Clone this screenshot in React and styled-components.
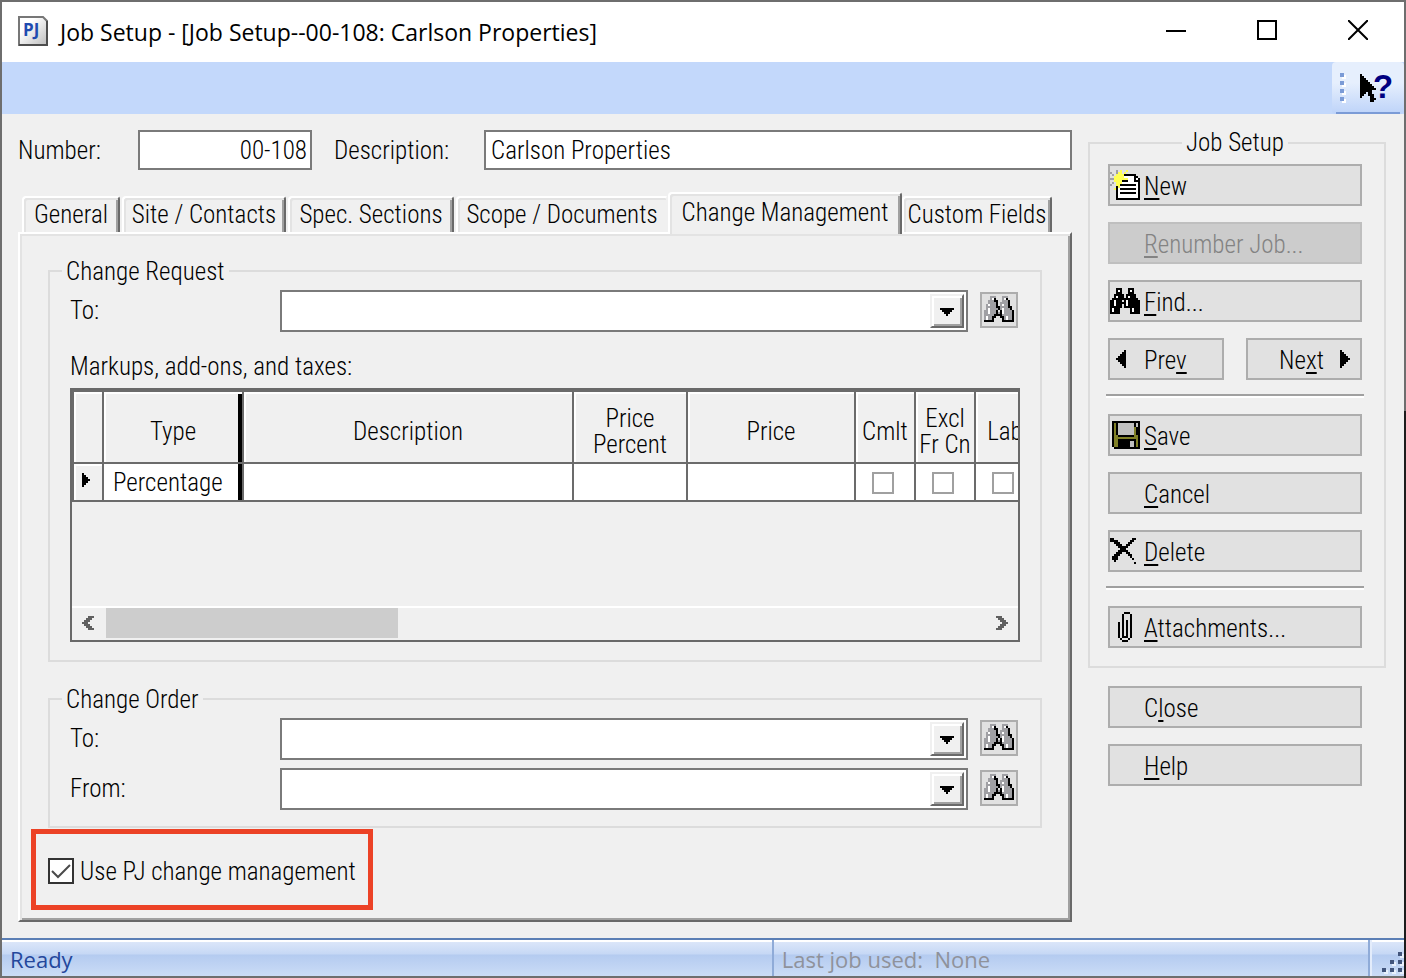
import { useState } from "react";
import styled, { createGlobalStyle, css } from "styled-components";

const GlobalStyle = createGlobalStyle`
  :root {
    --face: #f0f0f0;
    --shadow: #a0a0a0;
    --dark-shadow: #696969;
    --light: #e3e3e3;
    --group-line: #dcdcdc;
    --field-line: #7a7a7a;
    --grid-line: #6b6b6b;
  }

  * {
    box-sizing: border-box;
  }

  body {
    margin: 0;
  }

  body,
  button,
  input,
  select {
    color: #000;
    font-family: "Roboto Condensed", "Liberation Sans", sans-serif;
    font-size: 25px;
    font-weight: 300;
    line-height: 26px;
  }

  u {
    text-decoration-thickness: 2px;
    text-underline-offset: 3px;
    text-decoration-skip-ink: none;
  }
`;

/* ---------- pixel icons ---------- */

const palette = {
  k: "#000000",
  w: "#ffffff",
  g: "#a0a0a4",
  s: "#c0c0c0",
  y: "#ffff54",
  o: "#808026",
  d: "#606060",
};

const icons = {
  find: [
    "...kkk...kkk...",
    "...kwk...kwk...",
    "...kkk...kkk...",
    "..kkkkk.kkkkk..",
    "..kwkkk.kwkkk..",
    ".kkkkkkkkkkkkk.",
    "kkwkkk.kwkkkkkk",
    "kkwkkkkkwkkkkkk",
    "kkwkkk.kwkkkkkk",
    "kkkkkk.kkkkkkkk",
    "kwkkk.....kwkkk",
    "kwkkk.....kwkkk",
    "kkkkk.....kkkkk",
  ],
  lookup: [
    "...ggg...ggg...",
    "...gwk...gwk...",
    "..gggkk..gggk..",
    "..ggggk.ggggk..",
    ".gwgggk.gwggk..",
    ".gggggkkggggkk.",
    ".gwggggkgwgggk.",
    "ggwgggk.kwggggk",
    "ggwgggkgkwggggk",
    "gggggkkkkgggggk",
    "gwggkk..kkgwggk",
    "gwggk....kgwggk",
    "kkkkk....kkkkkk",
  ],
  fresh: [
    "...g.y..y......",
    "g..gyy.y.......",
    ".g.yyyykkkkkk..",
    "..yyyyywwwwwkk.",
    "ggyyyyyyywwwkwk",
    "..yyyykkkwwwkkk",
    ".g.yyywwwwwwwwk",
    "g..yykkkkkkkkwk",
    "...kywwwwwwwwwk",
    "..ykwkkkkkkkkwk",
    "...kwwwwwwwwwwk",
    "...kwkkkkkkkkwk",
    "...kwwwwwwwwwwk",
    "...kwwwwwwwwwwk",
    "...kkkkkkkkkkkk",
  ],
  save: [
    "kkkkkkkkkkkkkk",
    "kokssssssssksk",
    "kokssssssssksk",
    "kokssssssssokk",
    "kokssssssssokk",
    "kokssssssssokk",
    "kokssssssssokk",
    "kookkkkkkkkook",
    "kooooooooooook",
    "kookkkkkkkkkok",
    "kookkkkkksskok",
    "kookkkkkksskok",
    "kookkkkkksskok",
    ".kkkkkkkkkkkkk",
  ],
  remove: [
    "kk.........kk",
    "kkkk......kk.",
    "..kkk....kk..",
    "...kkk..kk...",
    "....kkkkk....",
    ".....kkk.....",
    "....kkkkk....",
    "...kkk..kk...",
    "..kkk....kk..",
    ".kkk......k..",
    ".kkk.......k.",
    "..k..........",
    "............k",
  ],
  clip: [
    "...kkk.",
    "..k...k",
    "..k...k",
    "..k...k",
    "..k.k.k",
    "k.k.k.k",
    "k.k.k.k",
    "k.k.k.k",
    "k.k.k.k",
    "k.k.k.k",
    "k.k.k.k",
    "k.k.k.k",
    "k.kkk.k",
    ".k...k.",
    "..kkk..",
  ],
  pointer: [
    "k.......",
    "kk......",
    "kkk.....",
    "kkkk....",
    "kkkkk...",
    "kkkkkk..",
    "kkkkkkk.",
    "kkkkkkkk",
    "kkkkkk..",
    "kkk.kk..",
    "kk..kkk.",
    "k....kk.",
    ".....kkk",
    ".....kk.",
  ],
  left: [
    "....k",
    "...kk",
    "..kkk",
    ".kkkk",
    "kkkkk",
    ".kkkk",
    "..kkk",
    "...kk",
    "....k",
  ],
  right: [
    "k....",
    "kk...",
    "kkk..",
    "kkkk.",
    "kkkkk",
    "kkkk.",
    "kkk..",
    "kk...",
    "k....",
  ],
  drop: ["kkkkkkk", ".kkkkk.", "..kkk..", "...k..."],
  row: ["k...", "kk..", "kkk.", "kkkk", "kkk.", "kk..", "k..."],
  scrollLeft: [
    "...ddd",
    "..ddd.",
    ".ddd..",
    "ddd...",
    ".ddd..",
    "..ddd.",
    "...ddd",
  ],
  scrollRight: [
    "ddd...",
    ".ddd..",
    "..ddd.",
    "...ddd",
    "..ddd.",
    ".ddd..",
    "ddd...",
  ],
};

const PixelSvg = styled.svg`
  display: block;
  flex: none;
`;

const PixelIcon = ({ name }) => {
  const rows = icons[name];
  const w = rows[0].length;
  const h = rows.length;
  return (
    <PixelSvg
      width={w * 2}
      height={h * 2}
      viewBox={`0 0 ${w} ${h}`}
      shapeRendering="crispEdges"
      aria-hidden="true"
    >
      {rows.map((row, y) =>
        [...row].map((cell, x) =>
          cell === "." ? null : (
            <rect
              key={`${x}.${y}`}
              x={x}
              y={y}
              width="1"
              height="1"
              fill={palette[cell]}
            />
          )
        )
      )}
    </PixelSvg>
  );
};

/* ---------- window frame ---------- */

const Window = styled.div`
  display: flex;
  flex-direction: column;
  min-height: 100vh;
  padding: 2px;
  background: linear-gradient(#6e6e6e 42%, #1c1c1c 42%) right / 2px 100%
      no-repeat,
    #6e6e6e;
`;

const TitleBar = styled.header`
  display: flex;
  align-items: center;
  height: 60px;
  padding: 0 1px 0 16px;
  background: #fff;

  h1 {
    flex: 1;
    margin: 0 0 0 11px;
    font: 400 23px/30px "Open Sans", sans-serif;
  }
`;

const CaptionButton = styled.button`
  display: flex;
  align-items: center;
  justify-content: center;
  width: 91px;
  height: 60px;
  padding: 0 0 4px;
  border: 0;
  background: none;
`;

const ToolStrip = styled.div`
  display: flex;
  justify-content: flex-end;
  height: 52px;
  background: #c3d8fb;
`;

const ToolPanel = styled.div`
  display: flex;
  align-items: center;
  gap: 14px;
  width: 72px;
  padding-left: 8px;
  border-radius: 4px;
  background: linear-gradient(#7b9bd6, #7b9bd6) 4px 100% / 64px 2px no-repeat,
    linear-gradient(#e6effd 40%, #bdd3f9);
`;

const ToolButton = styled.button`
  display: flex;
  padding: 0;
  border: 0;
  background: none;
`;

/* ---------- fields ---------- */

const Body = styled.main`
  display: grid;
  grid-template-columns: minmax(0, 1fr) 298px;
  flex: 1;
  gap: 16px;
  padding: 16px 18px 16px 16px;
  background: var(--face);
`;

const Column = styled.div`
  display: flex;
  flex-direction: column;
`;

const JobFields = styled.div`
  display: grid;
  grid-template-columns: 98px 174px 128px 1fr;
  column-gap: 22px;
  align-items: center;
  margin-bottom: 22px;

  label {
    padding-top: 2px;
  }
`;

const TextField = styled.input`
  width: 100%;
  height: 40px;
  padding: 0 ${(p) => (p.$right ? "3px" : "5px")};
  border: 2px solid var(--field-line);
  border-radius: 0;
  background: #fff;
  text-align: ${(p) => (p.$right ? "right" : "left")};
`;

/* ---------- tabs ---------- */

const TabList = styled.div`
  display: flex;
  align-items: flex-end;
  gap: 2px;
  height: 40px;
  padding-left: 4px;
`;

const Tab = styled.button`
  width: ${(p) => p.$width}px;
  height: 36px;
  padding: 0;
  border: 2px solid;
  border-color: #fff var(--dark-shadow) #fff #fff;
  border-bottom: 0;
  border-radius: 4px 3px 0 0;
  background: var(--face);
  box-shadow: inset 2px 2px var(--light), inset -2px 0 var(--shadow);
  white-space: nowrap;

  &:has(+ [aria-selected="true"]) {
    border-right-color: var(--face);
    box-shadow: inset 2px 2px var(--light);
  }

  ${(p) =>
    p.$active &&
    css`
      position: relative;
      height: 42px;
      margin: 0 -2px -2px;
      padding-bottom: 2px;
    `}
`;

const TabPanel = styled.section`
  display: flex;
  flex: 1;
  flex-direction: column;
  align-items: stretch;
  padding: 23px 4px 8px;
  border: 2px solid;
  border-color: #fff var(--dark-shadow) var(--dark-shadow) #fff;
  box-shadow: inset 2px 2px var(--light), inset -2px -2px var(--shadow);
`;

/* ---------- groups ---------- */

const Group = styled.fieldset`
  min-width: 0;
  margin: 0;
  padding: 0 12px;
  border: 2px solid var(--group-line);

  legend {
    padding: 0 4px;
  }
`;

const PanelGroup = styled(Group)`
  margin: 0 24px;

  & + & {
    margin-top: 23px;
  }

  legend {
    padding-top: 2px;
  }
`;

const GroupBody = styled.div`
  display: flex;
  flex-direction: column;
  gap: 8px;
  padding: 5px 8px 16px;
`;

const FieldRow = styled.div`
  display: flex;
  align-items: center;
  padding-right: 2px;

  label {
    width: 210px;
  }
`;

const ComboBox = styled.div`
  position: relative;
  flex: 1;

  select {
    display: block;
    width: 100%;
    height: 42px;
    padding: 0 40px 0 5px;
    border: 2px solid var(--field-line);
    border-radius: 0;
    background: #fff;
    appearance: none;
  }
`;

const ComboArrow = styled.span`
  position: absolute;
  top: 4px;
  right: 4px;
  display: flex;
  align-items: center;
  justify-content: center;
  width: 34px;
  height: 34px;
  padding-top: 2px;
  border: 2px solid;
  border-color: var(--face) var(--dark-shadow) var(--dark-shadow) var(--face);
  background: var(--face);
  box-shadow: inset 2px 2px #fff, inset -2px -2px var(--shadow);
  pointer-events: none;
`;

const LookupButton = styled.button`
  display: flex;
  align-items: center;
  justify-content: center;
  width: 38px;
  height: 36px;
  margin: 0 0 2px 12px;
  padding: 0 0 2px;
  border: 2px solid #adadad;
  background: #e1e1e1;
`;

const Caption = styled.div`
  padding: 14px 0 0;
`;

/* ---------- markup grid ---------- */

const GridFrame = styled.div`
  display: flex;
  flex-direction: column;
  height: 254px;
  margin-bottom: 2px;
  overflow: hidden;
  border: 2px solid var(--dark-shadow);
`;

const GridView = styled.div`
  flex: 1;
  overflow: hidden;
`;

const MarkupTable = styled.table`
  width: 964px;
  border-spacing: 0;
  border-top: 2px solid var(--grid-line);
  border-left: 2px solid var(--grid-line);
  table-layout: fixed;

  th,
  td {
    padding: 0;
    border-right: 2px solid var(--grid-line);
    border-bottom: 2px solid var(--grid-line);
    font-weight: inherit;
    text-align: center;
  }

  th {
    height: 72px;
    padding-top: 10px;
    box-shadow: inset 2px 2px #fff;
  }

  td {
    height: 38px;
    background: #fff;
  }

  tbody th {
    height: 38px;
    padding: 0 0 4px 8px;
  }

  .frozen {
    background: linear-gradient(#000, #000) right / 4px 100% no-repeat;
  }

  td.frozen {
    padding: 2px 0 0 9px;
    background-color: #fff;
    text-align: left;
  }
`;

const Col = styled.col`
  width: ${(p) => p.$width}px;
`;

const CellCheck = styled.input`
  display: block;
  width: 22px;
  height: 22px;
  margin: 2px auto 0 16px;
  border: 2px solid var(--shadow);
  appearance: none;
`;

const ScrollBar = styled.div`
  display: flex;
  align-items: center;
  height: 34px;
  padding: 0 10px;
  border-top: 2px solid #fff;
  border-bottom: 2px solid var(--face);
`;

const ScrollTrack = styled.div`
  flex: 1;
  height: 30px;
  margin: 0 12px;
`;

const ScrollThumb = styled.div`
  width: 292px;
  height: 30px;
  background: #cdcdcd;
`;

/* ---------- check row ---------- */

const Highlight = styled.div`
  display: flex;
  align-items: center;
  align-self: flex-start;
  width: 342px;
  height: 81px;
  margin: 1px 0 0 7px;
  padding: 3px 0 0 12px;
  border: 5px solid #ec4226;

  label {
    padding: 2px 0 0 6px;
    white-space: nowrap;
  }
`;

const CheckBox = styled.span`
  position: relative;
  width: 26px;
  height: 26px;

  input {
    display: block;
    width: 26px;
    height: 26px;
    margin: 0;
    border: 2px solid #333;
    background: #fff;
    appearance: none;
  }

  svg {
    position: absolute;
    top: 2px;
    left: 2px;
    pointer-events: none;
  }
`;

/* ---------- command column ---------- */

const CommandGroup = styled(Group)`
  padding: 0 22px 18px 18px;

  legend {
    margin: 0 auto;
  }
`;

const Commands = styled.div`
  display: flex;
  flex-direction: column;
  gap: 16px;
  padding-top: 8px;
`;

const LooseCommands = styled(Commands)`
  padding: 18px 24px 0 20px;
`;

const CommandPair = styled.div`
  display: grid;
  grid-template-columns: 1fr 1fr;
  gap: 22px;
`;

const Command = styled.button`
  display: flex;
  align-items: center;
  width: 100%;
  height: 42px;
  padding: 0;
  border: 2px solid #adadad;
  background: #e1e1e1;
  text-align: left;

  &:disabled {
    border-color: #bfbfbf;
    background: #ccc;
    color: #838383;
  }
`;

const CommandIcon = styled.span`
  width: 34px;
  padding-left: ${(p) => p.$inset || 0}px;
`;

const CommandLabel = styled.span`
  padding-top: 4px;
`;

const NextLabel = styled(CommandLabel)`
  flex: 1;
  padding-right: 16px;
  text-align: right;
`;

const NextIcon = styled.span`
  padding-right: 10px;
`;

const Separator = styled.hr`
  width: calc(100% + 4px);
  height: 4px;
  margin: -2px -2px 0;
  border: 0;
  border-top: 2px solid var(--shadow);
  background: #fff;
`;

/* ---------- status bar ---------- */

const StatusBar = styled.footer`
  display: flex;
  height: 38px;
  border-top: 2px solid #5b7fb5;
  background: linear-gradient(
    #fff 2px,
    #dbe6f9 2px,
    #c6d8f5 14px,
    #b4cbf0 15px,
    #cbdcf6
  );
  color: #24479c;
  font: 400 22px/38px "Open Sans", sans-serif;
`;

const StatusPane = styled.div`
  flex: ${(p) => p.$grow};
  padding-left: 8px;
  border-right: 2px solid #8fabd8;
  color: ${(p) => (p.$dim ? "#8f929b" : "inherit")};
  white-space: pre;
`;

const SizeGrip = styled.div`
  display: flex;
  align-items: flex-end;
  width: 34px;
  padding: 0 0 2px 10px;
  border-left: 2px solid #e3ecfb;
`;

const commands = [
  { key: "new", icon: "fresh", label: <><u>N</u>ew</> },
  { key: "renumber", disabled: true, label: <><u>R</u>enumber Job...</> },
  { key: "find", icon: "find", label: <><u>F</u>ind...</> },
];

const editCommands = [
  { key: "save", icon: "save", inset: 2, label: <><u>S</u>ave</> },
  { key: "cancel", label: <><u>C</u>ancel</> },
  { key: "delete", icon: "remove", label: <><u>D</u>elete</> },
];

const tabs = [
  { label: "General", width: 98 },
  { label: "Site / Contacts", width: 164 },
  { label: "Spec. Sections", width: 166 },
  { label: "Scope / Documents", width: 212 },
  { label: "Change Management", width: 234 },
  { label: "Custom Fields", width: 150 },
];

const columnWidths = [30, 140, 330, 114, 168, 60, 60, 60];

const CommandButton = ({ icon, inset, label, disabled }) => (
  <Command type="button" disabled={disabled}>
    <CommandIcon $inset={inset}>{icon && <PixelIcon name={icon} />}</CommandIcon>
    <CommandLabel>{label}</CommandLabel>
  </Command>
);

const LookupField = ({ id, label }) => (
  <FieldRow>
    <label htmlFor={id}>{label}</label>
    <ComboBox>
      <select id={id}>
        <option></option>
      </select>
      <ComboArrow>
        <PixelIcon name="drop" />
      </ComboArrow>
    </ComboBox>
    <LookupButton type="button" aria-label="Look up">
      <PixelIcon name="lookup" />
    </LookupButton>
  </FieldRow>
);

const AppIcon = () => (
  <svg width="31" height="32" viewBox="0 0 31 32" aria-hidden="true">
    <defs>
      <linearGradient id="page" x1="0" y1="0" x2="1" y2="1">
        <stop offset="0.3" stopColor="#ffffff" />
        <stop offset="1" stopColor="#bdbdbd" />
      </linearGradient>
    </defs>
    <path d="M1 1H25L29 5V29H1Z" fill="url(#page)" stroke="#777" strokeWidth="2" />
    <path d="M29 5V29H1" fill="none" stroke="#4e4e4e" strokeWidth="2" />
    <text
      x="5"
      y="20"
      fill="#1f4bb0"
      fontFamily="Open Sans, sans-serif"
      fontSize="17"
      fontWeight="700"
    >
      PJ
    </text>
  </svg>
);

const Grip = () => (
  <svg width="6" height="30" aria-hidden="true">
    {[0, 8, 16, 24].map((y) => (
      <g key={y}>
        <rect x="2" y={y + 2} width="4" height="4" fill="#fff" />
        <rect y={y} width="4" height="4" fill="#7b9bd6" />
      </g>
    ))}
  </svg>
);

const gripDots = [
  [16, 0],
  [8, 8],
  [16, 8],
  [0, 16],
  [8, 16],
  [16, 16],
];

export default function App() {
  const [activeTab, setActiveTab] = useState("Change Management");
  const [usePj, setUsePj] = useState(true);

  return (
    <>
      <GlobalStyle />
      <Window>
        <TitleBar>
          <AppIcon />
          <h1>Job Setup - [Job Setup--00-108: Carlson Properties]</h1>
          <CaptionButton type="button" aria-label="Minimize">
            <svg width="20" height="20">
              <rect y="10" width="20" height="2" />
            </svg>
          </CaptionButton>
          <CaptionButton type="button" aria-label="Maximize">
            <svg width="20" height="20">
              <rect x="1" y="1" width="18" height="18" fill="none" stroke="#000" strokeWidth="2" />
            </svg>
          </CaptionButton>
          <CaptionButton type="button" aria-label="Close window">
            <svg width="20" height="20">
              <path d="M0 0L20 20M20 0L0 20" stroke="#000" strokeWidth="2" />
            </svg>
          </CaptionButton>
        </TitleBar>

        <ToolStrip>
          <ToolPanel>
            <Grip />
            <ToolButton type="button" aria-label="Help pointer">
              <svg width="40" height="40">
                <svg width="16" height="28" y="6">
                  <PixelIcon name="pointer" />
                </svg>
                <text
                  x="13"
                  y="30"
                  fill="#000080"
                  fontFamily="Liberation Sans, sans-serif"
                  fontSize="33"
                  fontWeight="700"
                >
                  ?
                </text>
              </svg>
            </ToolButton>
          </ToolPanel>
        </ToolStrip>

        <Body>
          <Column>
            <JobFields>
              <label htmlFor="number">Number:</label>
              <TextField id="number" $right defaultValue="00-108" />
              <label htmlFor="description">Description:</label>
              <TextField id="description" defaultValue="Carlson Properties" />
            </JobFields>

            <TabList role="tablist">
              {tabs.map(({ label, width }) => (
                <Tab
                  key={label}
                  type="button"
                  role="tab"
                  aria-selected={label === activeTab}
                  $width={width}
                  $active={label === activeTab}
                  onClick={() => setActiveTab(label)}
                >
                  {label}
                </Tab>
              ))}
            </TabList>

            <TabPanel>
              <PanelGroup>
                <legend>Change Request</legend>
                <GroupBody>
                  <LookupField id="request-to" label="To:" />
                  <Caption>Markups, add-ons, and taxes:</Caption>
                  <GridFrame>
                    <GridView>
                      <MarkupTable>
                        <colgroup>
                          {columnWidths.map((width, i) => (
                            <Col key={i} $width={width} />
                          ))}
                        </colgroup>
                        <thead>
                          <tr>
                            <th></th>
                            <th className="frozen">Type</th>
                            <th>Description</th>
                            <th>
                              Price
                              <br />
                              Percent
                            </th>
                            <th>Price</th>
                            <th>Cmlt</th>
                            <th>
                              Excl
                              <br />
                              Fr Cn
                            </th>
                            <th>Lab</th>
                          </tr>
                        </thead>
                        <tbody>
                          <tr>
                            <th scope="row">
                              <PixelIcon name="row" />
                            </th>
                            <td className="frozen">Percentage</td>
                            <td></td>
                            <td></td>
                            <td></td>
                            {["Cmlt", "Excl Fr Cn", "Lab"].map((name) => (
                              <td key={name}>
                                <CellCheck type="checkbox" aria-label={name} />
                              </td>
                            ))}
                          </tr>
                        </tbody>
                      </MarkupTable>
                    </GridView>
                    <ScrollBar>
                      <PixelIcon name="scrollLeft" />
                      <ScrollTrack>
                        <ScrollThumb />
                      </ScrollTrack>
                      <PixelIcon name="scrollRight" />
                    </ScrollBar>
                  </GridFrame>
                </GroupBody>
              </PanelGroup>

              <PanelGroup>
                <legend>Change Order</legend>
                <GroupBody>
                  <LookupField id="order-to" label="To:" />
                  <LookupField id="order-from" label="From:" />
                </GroupBody>
              </PanelGroup>

              <Highlight>
                <CheckBox>
                  <input
                    id="use-pj"
                    type="checkbox"
                    checked={usePj}
                    onChange={(e) => setUsePj(e.target.checked)}
                  />
                  {usePj && (
                    <svg width="22" height="22" aria-hidden="true">
                      <path d="M2 11L8 17L20 5" fill="none" stroke="#4a4a4a" strokeWidth="2" />
                    </svg>
                  )}
                </CheckBox>
                <label htmlFor="use-pj">Use PJ change management</label>
              </Highlight>
            </TabPanel>
          </Column>

          <Column>
            <CommandGroup>
              <legend>Job Setup</legend>
              <Commands>
                {commands.map(({ key, ...props }) => (
                  <CommandButton key={key} {...props} />
                ))}
                <CommandPair>
                  <CommandButton icon="left" inset={6} label={<>Pre<u>v</u></>} />
                  <Command type="button">
                    <NextLabel>
                      Ne<u>x</u>t
                    </NextLabel>
                    <NextIcon>
                      <PixelIcon name="right" />
                    </NextIcon>
                  </Command>
                </CommandPair>
                <Separator />
                {editCommands.map(({ key, ...props }) => (
                  <CommandButton key={key} {...props} />
                ))}
                <Separator />
                <CommandButton icon="clip" inset={8} label={<><u>A</u>ttachments...</>} />
              </Commands>
            </CommandGroup>
            <LooseCommands>
              <CommandButton label={<>C<u>l</u>ose</>} />
              <CommandButton label={<><u>H</u>elp</>} />
            </LooseCommands>
          </Column>
        </Body>

        <StatusBar>
          <StatusPane $grow={773}>Ready</StatusPane>
          <StatusPane $grow={595} $dim>
            {"Last job used:  None"}
          </StatusPane>
          <SizeGrip>
            <svg width="22" height="22" aria-hidden="true">
              {gripDots.map(([x, y]) => (
                <g key={`${x}.${y}`}>
                  <rect x={x + 2} y={y + 2} width="4" height="4" fill="#e8f0fc" />
                  <rect x={x} y={y} width="4" height="4" fill="#42557c" />
                </g>
              ))}
            </svg>
          </SizeGrip>
        </StatusBar>
      </Window>
    </>
  );
}
